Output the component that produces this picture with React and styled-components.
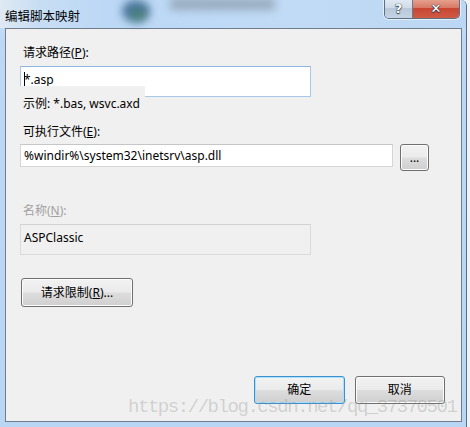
import React from 'react'
import styled, { createGlobalStyle } from 'styled-components'

const GlobalStyle = createGlobalStyle`
  html, body {
    margin: 0;
    padding: 0;
    background: #eef3f8;
  }
  * {
    box-sizing: border-box;
  }
`

const uiFont = `"Noto Sans", "Noto Sans CJK SC", sans-serif`

const Window = styled.div`
  position: relative;
  width: 467px;
  height: 427px;
  display: flex;
  flex-direction: column;
  background: linear-gradient(180deg, #d3e6f9 0px, #bcd8f5 40px, #b9d6f4 100%);
  border-right: 1px solid #5d6c7c;
  border-top-right-radius: 6px;
  overflow: hidden;
  font-family: ${uiFont};
  font-size: 12px;
  color: #000;
`

const TitleBar = styled.div`
  position: relative;
  height: 28px;
  flex-shrink: 0;
  display: flex;
  align-items: flex-start;
  justify-content: space-between;
  padding-left: 5px;
  background: linear-gradient(90deg, #dfe9f3 0px, #c7ddf3 40px, #bcd8f6 110px, #c1dbf6 300px, #bcd7f3 100%);
`

const Title = styled.span`
  position: relative;
  z-index: 1;
  margin-top: 8px;
  font-size: 12.5px;
  line-height: 17px;
  color: #000;
`

const Blur = styled.div`
  position: absolute;
  top: ${p => p.top}px;
  left: ${p => p.left}px;
  width: ${p => p.w}px;
  height: ${p => p.h}px;
  border-radius: ${p => p.round ? '50%' : '3px'};
  background: ${p => p.bg};
  filter: blur(${p => p.blur}px);
  opacity: ${p => p.op};
`

const Controls = styled.div`
  position: relative;
  z-index: 1;
  display: flex;
  margin-right: 6px;
  margin-top: -1px;
  border: 1px solid #5f6f82;
  border-top: none;
  border-radius: 0 0 5px 5px;
  overflow: hidden;
  box-shadow: 0 0 0 1px rgba(255, 255, 255, 0.6);
`

const CtrlButton = styled.div`
  width: ${p => p.w}px;
  height: 19px;
  display: flex;
  align-items: center;
  justify-content: center;
  font-family: "DejaVu Sans", sans-serif;
  font-weight: bold;
  font-size: ${p => p.fs}px;
  color: #fff;
  text-shadow: 0 0 1px #2c3a4a, 0 0 1px #2c3a4a, 0 1px 1px #2c3a4a;
  background: ${p => p.close
    ? 'linear-gradient(180deg, #e8a593 0%, #d87a68 45%, #c84632 50%, #cf5a45 100%)'
    : 'linear-gradient(180deg, #e3ebf4 0%, #cfdbe8 45%, #b8c8da 50%, #c5d4e4 100%)'};
  & + & {
    border-left: 1px solid #6b7b8c;
  }
`

const Panel = styled.div`
  flex: 1;
  display: flex;
  flex-direction: column;
  margin: 0 4px 5px 5px;
  padding: 16px 16px 17px 14px;
  background: #f0f0f0;
  border: 1px solid #6f7d8c;
`

const Label = styled.div`
  line-height: 16px;
  padding-left: 3px;
  color: ${p => p.disabled ? '#a0a0a0' : '#000'};
  margin-top: ${p => p.top || 0}px;
  & u {
    text-decoration: underline;
    text-underline-offset: 1px;
  }
`

const Hint = styled.div`
  position: relative;
  align-self: flex-start;
  width: 125px;
  margin-top: -11px;
  padding: 10px 0 0 3px;
  line-height: 16px;
  background: #f0f0f0;
`

const TextBox = styled.div`
  width: ${p => p.w}px;
  height: ${p => p.h}px;
  margin-top: ${p => p.top || 0}px;
  padding: ${p => p.pad || 2}px 3px 0;
  line-height: 16px;
  background: ${p => p.readOnly ? '#f0f0f0' : '#fff'};
  border: 1px solid ${p => p.focus ? '#a9c8e8' : p.readOnly ? '#dadada' : '#d5d5d5'};
  border-top-color: ${p => p.focus ? '#8fb6de' : p.readOnly ? '#d2d2d2' : '#c6c6c6'};
  white-space: nowrap;
`

const Caret = styled.span`
  display: inline-block;
  width: 1px;
  height: 15px;
  margin-right: -1px;
  vertical-align: -3px;
  background: #000;
`

const Row = styled.div`
  display: flex;
  align-items: flex-start;
  gap: ${p => p.gap || 0}px;
  margin-top: ${p => p.top || 0}px;
  margin-left: ${p => p.left || 0}px;
`

const Button = styled.div`
  width: ${p => p.w}px;
  height: ${p => p.h}px;
  display: flex;
  align-items: center;
  justify-content: center;
  line-height: 16px;
  border-radius: 3px;
  border: 1px solid ${p => p.primary ? '#3d8fcf' : '#707070'};
  box-shadow: inset 0 0 0 1px ${p => p.primary ? '#a8e1fb' : '#fcfcfc'};
  background: linear-gradient(180deg, #f2f2f2 0%, #ebebeb 48%, #dddddd 52%, #cfcfcf 100%);
  & u {
    text-decoration: underline;
    text-underline-offset: 1px;
  }
`

const Spacer = styled.div`
  flex: 1;
`

const Watermark = styled.div`
  position: absolute;
  left: 128px;
  top: 397px;
  font-family: "Liberation Mono", monospace;
  font-size: 19px;
  letter-spacing: -1.45px;
  line-height: 20px;
  color: rgba(140, 140, 140, 0.32);
  white-space: nowrap;
  pointer-events: none;
`

export default function App() {
  return (
    <>
      <GlobalStyle />
      <Window>
        <TitleBar>
          <Blur left={122} top={0} w={28} h={22} round bg="#2f5f86" blur={4} op={0.8} />
          <Blur left={130} top={9} w={16} h={12} round bg="#4a8a5a" blur={4} op={0.55} />
          <Blur left={170} top={-2} w={105} h={12} bg="#7f8c9a" blur={4} op={0.6} />
          <Title>编辑脚本映射</Title>
          <Controls>
            <CtrlButton w={27} fs={13}>?</CtrlButton>
            <CtrlButton w={47} fs={13} close>✕</CtrlButton>
          </Controls>
        </TitleBar>
        <Panel>
          <Label>请求路径(<u>P</u>):</Label>
          <TextBox w={291} h={31} top={5} pad={5} focus>
            <Caret />*.asp
          </TextBox>
          <Hint>示例: *.bas, wsvc.axd</Hint>
          <Label top={12}>可执行文件(<u>E</u>):</Label>
          <Row top={4} gap={7}>
            <TextBox w={373} h={23} pad={3}>%windir%\system32\inetsrv\asp.dll</TextBox>
            <Button w={29} h={27}>...</Button>
          </Row>
          <Label top={32} disabled>名称(<u>N</u>):</Label>
          <TextBox w={291} h={31} top={5} pad={5} readOnly>ASPClassic</TextBox>
          <Row top={23} left={1}>
            <Button w={112} h={29}>请求限制(<u>R</u>)...</Button>
          </Row>
          <Spacer />
          <Row gap={10} left={234}>
            <Button w={91} h={28} primary>确定</Button>
            <Button w={91} h={28}>取消</Button>
          </Row>
        </Panel>
        <Watermark>https://blog.csdn.net/qq_37370501</Watermark>
      </Window>
    </>
  )
}
